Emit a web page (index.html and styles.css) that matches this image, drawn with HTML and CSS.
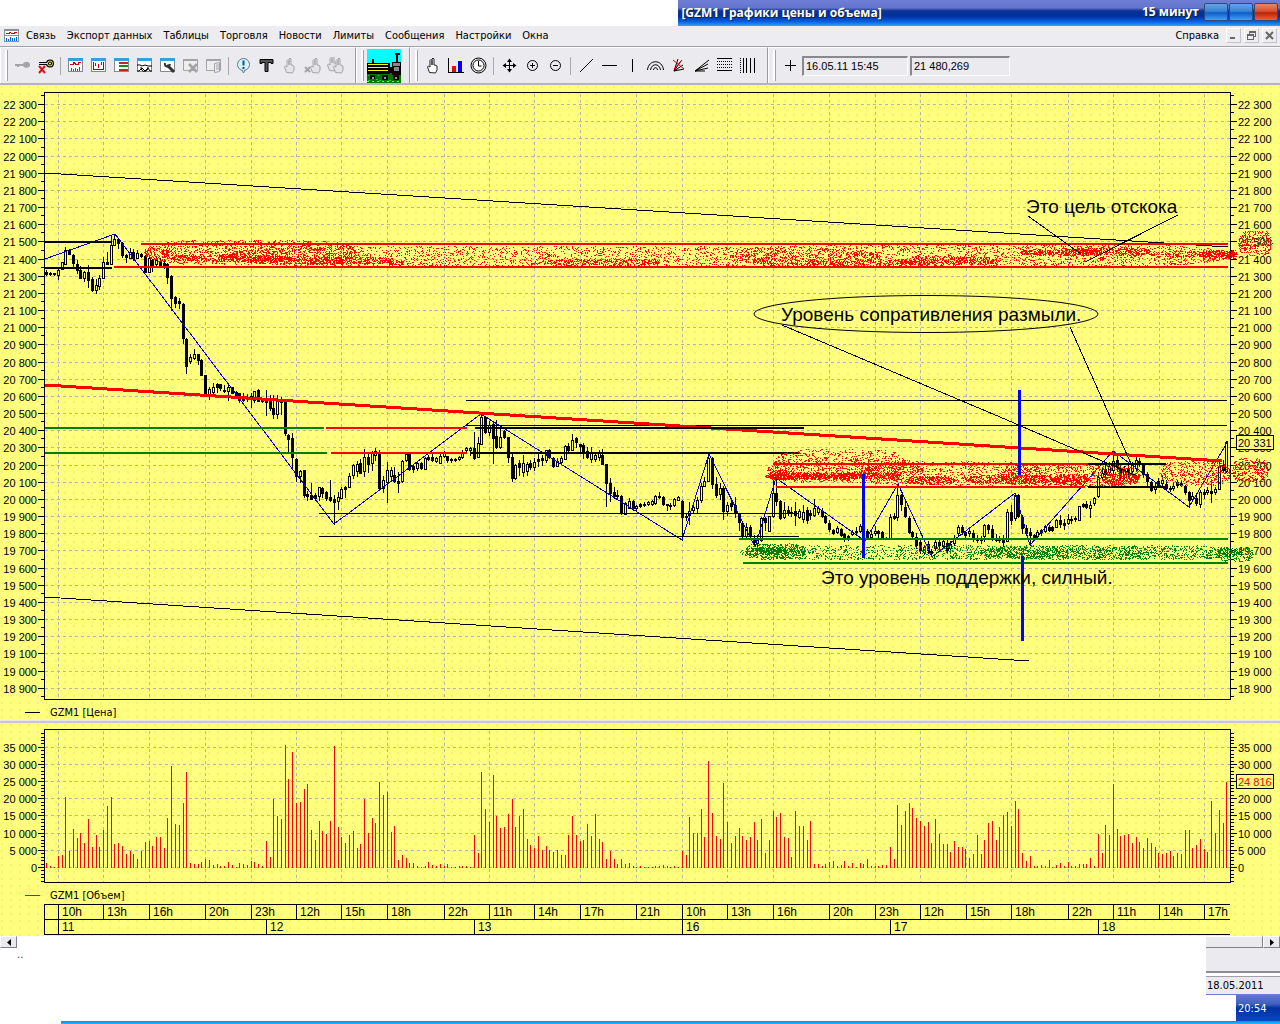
FILE: index.html
```html
<!DOCTYPE html>
<html lang="ru">
<head>
<meta charset="utf-8">
<title>GZM1 Графики цены и объема</title>
<link rel="stylesheet" href="styles.css">
</head>
<body>
<header class="titlebar">
  <div class="titlebar-blank"></div>
  <div class="titlebar-main">
    <h1 class="title">[GZM1 Графики цены и объема]</h1>
    <span class="interval">15 минут</span>
    <button class="win" aria-label="Свернуть"></button>
    <button class="win" aria-label="Развернуть"></button>
    <button class="win win-close" aria-label="Закрыть"></button>
  </div>
</header>

<nav class="menubar">
  <svg class="menu-icon" width="15" height="13" viewBox="0 0 15 13" shape-rendering="crispEdges"><path fill="#8c9097" d="M0 0h15v13H0z"/><path fill="#fff" d="M1 2h13v4H1zM1 7h13v5H1z"/><path stroke="#d00" fill="none" d="M2 4.500h3l1-1 2 1h2l1-1h2"/><path stroke="#06c" d="M2.500 12V9M4.500 12v-2M6.500 12V8M8.500 12v-3M10.500 12V9M12.500 12V8"/></svg>
  <button>Связь</button><button>Экспорт данных</button><button>Таблицы</button><button>Торговля</button><button>Новости</button><button>Лимиты</button><button>Сообщения</button><button>Настройки</button><button>Окна</button>
  <button class="help">Справка</button>
  <span class="mdi">
    <button aria-label="Свернуть окно"><svg width="9" height="9" viewBox="0 0 9 9"><path fill="#666" d="M1 6h5v2H1z"/></svg></button>
    <button aria-label="Восстановить окно"><svg width="9" height="9" viewBox="0 0 9 9" shape-rendering="crispEdges"><path fill="none" stroke="#666" d="M2.500 3V.5h6v5H7M.5 3.500h6v5h-6zM3 1.500h5M1 4.500h5"/></svg></button>
    <button aria-label="Закрыть окно"><svg width="9" height="9" viewBox="0 0 9 9"><path stroke="#666" stroke-width="2" d="M1 1l7 7M8 1L1 8"/></svg></button>
  </span>
</nav>

<div class="toolbar">
  <div class="group group-main">
    <i class="grip"></i>
    <button aria-label="Подключить"><svg viewBox="0 0 17 17"><path fill="#a4a4a8" d="M1 7h8c1-3 6-3 7 0 1 4-5 5-7 2H5v1H3V9H1z"/></svg></button>
    <button aria-label="Отключить"><svg viewBox="0 0 17 17"><path fill="none" stroke="#000" stroke-width="3" d="M2 6.500h8"/><circle cx="13" cy="6.500" r="2.500" fill="none" stroke="#000" stroke-width="3"/><path stroke="#ee5" d="M2 6.500h9"/><circle cx="13" cy="6.500" r="2.500" fill="none" stroke="#ee5"/><path stroke="#d11" stroke-width="2" d="M2 9l6 7M8 9l-6 7"/></svg></button>
    <i class="sep"></i>
    <button aria-label="График"><svg viewBox="0 0 17 17" shape-rendering="crispEdges"><use href="#window"/><path stroke="#c00" fill="none" d="M3 7.500h3l1-2 2 2h2l1-2h2"/><path stroke="#06c" d="M4.500 14v-3M6.500 14v-2M8.500 14v-3M10.500 14v-2M12.500 14v-4"/></svg></button>
    <button aria-label="Свечи"><svg viewBox="0 0 17 17" shape-rendering="crispEdges"><use href="#window"/><path stroke="#22d" fill="none" d="M3.500 5v7.500h10V5"/><path stroke="#d00" d="M5.500 6v3M8.500 7v4M11.500 5v3"/></svg></button>
    <button aria-label="Котировки"><svg viewBox="0 0 17 17" shape-rendering="crispEdges"><use href="#window"/><path stroke="#c22" stroke-width="2" d="M6 6h9M6 13h9"/><path stroke="#282" stroke-width="2" d="M6 9h9"/></svg></button>
    <button aria-label="Сделки"><svg viewBox="0 0 17 17"><use href="#window"/><path fill="#fff" stroke="#000" d="M1 8h3l2 1 3-1 3 1h4M1 14h2l3-3 3 3 3-3 2 3h2M5 10c0 6 7 6 7 0"/></svg></button>
    <button aria-label="Настроить таблицу"><svg viewBox="0 0 17 17"><use href="#window"/><path stroke="#333" stroke-width="3" d="M8 8l7 7"/><path fill="none" stroke="#333" stroke-width="2" d="M6 6c-1 4 4 5 5 1"/></svg></button>
    <button aria-label="Удалить окно" disabled><svg viewBox="0 0 17 17"><use href="#window-off"/><path stroke="#a4a4a8" stroke-width="2.500" d="M7 7l8 8M15 7l-8 8"/></svg></button>
    <button aria-label="Копировать окно" disabled><svg viewBox="0 0 17 17"><use href="#window-off"/><path fill="#eee" stroke="#a4a4a8" d="M9.500 6.500l5-1v9l-5 1zM11 8h3M11 10h3M11 12h3"/></svg></button>
    <i class="sep"></i>
    <button aria-label="Сообщение"><svg viewBox="0 0 17 17"><circle cx="8.500" cy="7.500" r="6" fill="#d7f3f7" stroke="#678"/><path fill="#d7f3f7" stroke="#678" d="M7 13l1.500 3 1.500-3"/><path stroke="#05a" stroke-width="2" d="M8.500 3.500v5M8.500 10v2"/></svg></button>
    <button aria-label="Текст"><svg viewBox="0 0 17 17"><path fill="#555" stroke="#000" d="M2 2.500h13v4h-2v-1h-3v9H7v-9H4v1H2z"/></svg></button>
    <button aria-label="Заявка" disabled><svg viewBox="0 0 17 17"><use href="#hand" fill="#e4e4e8" stroke="#a4a4a8"/></svg></button>
    <button aria-label="Снять заявку" disabled><svg viewBox="0 0 17 17"><use href="#hand" x="3" fill="#e4e4e8" stroke="#a4a4a8"/><path stroke="#a4a4a8" stroke-width="2" d="M1 10l5 5M6 10l-5 5"/></svg></button>
    <button aria-label="Изменить заявку" disabled><svg viewBox="0 0 17 17"><use href="#hand" x="-3" y="-2" fill="#e4e4e8" stroke="#a4a4a8"/><use href="#hand" x="3" fill="#e4e4e8" stroke="#a4a4a8"/></svg></button>
  </div>
  <div class="group group-train">
    <i class="grip"></i>
    <button class="train" aria-label="Паровоз"><svg width="34" height="34" viewBox="0 0 34 34" shape-rendering="crispEdges"><path fill="#0ff" d="M0 0h34v34H0z"/><path fill="#070" d="M0 23h34v11H0z"/><path fill="#000" d="M0 14h23v11H0zM5 10h2v4H5zM28 4h5v2h-5zM29 6h2v8h-2zM22 18h4v6h-4zM25 13h9v13h-9z"/><path stroke="#ff0" d="M1 15.500h20M1 18.500h20M1 21.500h20"/><path fill="#888" d="M26 14h7v3h-7zM27 18h5v4h-5z"/><path fill="#000" d="M3 26h5v4H3zM15 26h6v5h-6zM26 26h6v5h-6z"/><path fill="#999" d="M5 28h2v2H5zM17 28h2v2h-2zM28 28h2v2h-2z"/><path fill="#0d0" d="M1 31h2v1H1zM9 30h2v1H9zM12 31h2v1h-2zM22 31h2v1h-2zM1 26h1v1H1zM11 26h1v1h-1z"/><path stroke="#cc0" stroke-dasharray="2 3" d="M0 32.500h34"/></svg></button>
  </div>
  <div class="group group-draw">
    <i class="grip"></i>
    <button aria-label="Курсор"><svg viewBox="0 0 17 17"><use href="#hand" fill="#fff" stroke="#222"/></svg></button>
    <button aria-label="Диаграмма"><svg viewBox="0 0 17 17" shape-rendering="crispEdges"><path stroke="#000" fill="none" d="M1.500 1v14.500H17"/><path fill="#f00" d="M5 9h4v6H5z"/><path fill="#00f" d="M11 4h4v11h-4z"/></svg></button>
    <button aria-label="Интервал"><svg viewBox="0 0 17 17"><circle cx="8.500" cy="8.500" r="7.500" fill="none" stroke="#000"/><circle cx="8.500" cy="8.500" r="5.500" fill="#fff" stroke="#000"/><path stroke="#000" fill="none" d="M8.500 4v5h3"/></svg></button>
    <i class="sep"></i>
    <button aria-label="Переместить"><svg viewBox="0 0 17 17"><path stroke="#000" d="M8.500 3v11M3 8.500h11"/><path d="M8.500 1.500L11 5H6zM8.500 15.500L11 12H6zM1.500 8.500L5 6v5zM15.500 8.500L12 6v5z"/></svg></button>
    <button aria-label="Увеличить"><svg viewBox="0 0 17 17"><circle cx="8.500" cy="8.500" r="5" fill="none" stroke="#000"/><path stroke="#000" d="M6 8.500h5M8.500 6v5"/></svg></button>
    <button aria-label="Уменьшить"><svg viewBox="0 0 17 17"><circle cx="8.500" cy="8.500" r="5" fill="none" stroke="#000"/><path stroke="#000" d="M6 8.500h5"/></svg></button>
    <i class="sep"></i>
    <button aria-label="Линия"><svg viewBox="0 0 17 17"><path stroke="#000" d="M2 15L15 2"/></svg></button>
    <button aria-label="Горизонталь"><svg viewBox="0 0 17 17"><path stroke="#000" d="M1 8.500h15"/></svg></button>
    <button aria-label="Вертикаль"><svg viewBox="0 0 17 17"><path stroke="#000" d="M8.500 2v13"/></svg></button>
    <button aria-label="Дуги"><svg viewBox="0 0 17 17"><path stroke="#000" fill="none" d="M.5 13c1-11 15-11 16 0M3.500 13c1-7 9-7 10 0M6.500 13c0-3 4-3 4 0"/></svg></button>
    <button aria-label="Веер Ганна"><svg viewBox="0 0 17 17"><path stroke="#000" d="M4 14L8 2M4 14l7-10M4 14l9-6M4 14l10-2"/><path stroke="#e00" d="M3 3l11 9M12 3l-8 9"/></svg></button>
    <button aria-label="Веер Фибоначчи"><svg viewBox="0 0 17 17"><path stroke="#000" d="M2 14L16 3M2 14l13-7M2 14l13-3M2 14h10"/></svg></button>
    <button aria-label="Уровни"><svg viewBox="0 0 17 17" shape-rendering="crispEdges"><path stroke="#000" d="M1 1.500h15M1 13.500h15"/><path stroke="#000" stroke-dasharray="1 1" d="M1 4.500h15M1 7.500h15M1 10.500h15"/></svg></button>
    <button aria-label="Временные зоны"><svg viewBox="0 0 17 17" shape-rendering="crispEdges"><path stroke="#000" d="M4.500 1v15M7.500 1v15M11.500 1v15M15.500 1v15"/><path stroke="#000" stroke-dasharray="1 1" d="M1.500 1v15"/></svg></button>
  </div>
  <div class="group group-readout">
    <i class="grip"></i>
    <button aria-label="Перекрестие"><svg viewBox="0 0 17 17"><path stroke="#000" d="M3 8.500h11M8.500 3v11"/></svg></button>
    <input class="readout" aria-label="Время" value="16.05.11 15:45" readonly>
    <input class="readout" aria-label="Цена" value="21 480,269" readonly>
  </div>
</div>

<main>
  <section class="panel price-panel"><svg id="price" class="chart" viewBox="0 85 1280 635" role="img" aria-label="GZM1 Цена"></svg></section>
  <section class="panel volume-panel"><svg id="volume" class="chart" viewBox="0 723 1280 213" role="img" aria-label="GZM1 Объем"></svg></section>
</main>

<footer class="footer">
  <div class="footer-left">
    <button class="scroll-btn" aria-label="Влево"><svg width="4" height="7" viewBox="0 0 4 7"><path d="M4 0v7L0 3.500z"/></svg></button>
    <span class="dots">..</span>
  </div>
  <div class="footer-right">
    <div class="scroll-row"><span class="thumb"></span><button class="scroll-btn" aria-label="Вправо"><svg width="4" height="7" viewBox="0 0 4 7"><path d="M0 0v7l4-3.500z"/></svg></button></div>
    <div class="blank"></div>
    <div class="date">18.05.2011</div>
    <div class="clock">20:54</div>
  </div>
</footer>
<div class="taskbar"></div>

<svg class="defs" width="0" height="0" aria-hidden="true">
  <defs>
    <g id="window"><path fill="#fff" stroke="#888" d="M1.500 2.500h14v12h-14z"/><path fill="#3a9fd8" d="M1 1h15v3H1z"/></g>
    <g id="window-off"><path fill="#eee" stroke="#a4a4a8" d="M1.500 2.500h14v11h-14z"/><path fill="#a4a4a8" d="M1 2h15v2H1z"/></g>
    <path id="hand" d="M5.500 15.500L3.500 10l1-1 1.500 1V3.500l1-1 1 1V8V2l1-1 1 1v6l1 0 1 .5 1 .5v4l-1.500 3z"/>
  </defs>
</svg>
<script src="chart.js"></script>
</body>
</html>
```
FILE: styles.css
```css
* { box-sizing: border-box; }
body {
  margin: 0;
  background: #fff;
  color: #000;
  font: 11px/13px "DejaVu Sans Condensed", "Noto Sans", sans-serif;
}
button { font: inherit; color: inherit; background: none; border: 0; padding: 0; margin: 0; }

.titlebar { display: flex; height: 26px; }
.titlebar-blank { flex: 0 0 53%; }
.titlebar-main {
  flex: 1;
  display: flex;
  align-items: center;
  gap: 1px;
  padding: 0 2px 2px 3px;
  color: #fff;
  font: bold 12px/16px "Open Sans", sans-serif;
  text-shadow: 1px 1px #123;
  background: linear-gradient(#6f7fd6 0, #6474cc 30%, #0a3296 42%, #002f9c 62%, #0a62e8 84%, #2fa2f8 100%);
}
.title { margin: 0; padding-top: 2px; font: inherit; flex: 1; white-space: nowrap; }
.interval { margin-right: 4px; font-size: 12px; }
.win {
  width: 24px;
  height: 18px;
  border: 1px solid #2c4a7c;
  border-radius: 2px;
  background: linear-gradient(#5fa5e6, #3a84d4 45%, #0a5cc8 55%, #3fa4f4);
}
.win-close { background: linear-gradient(#e88868, #d85030 45%, #b82408 55%, #f06030); }

.menubar {
  display: flex;
  align-items: center;
  gap: 11px;
  height: 20px;
  padding: 0 3px 2px 4px;
  background: #edecf0;
}
.menu-icon { margin-right: -4px; }
.menubar button { white-space: nowrap; }
.help { margin-left: auto; }
.mdi { display: flex; gap: 3px; margin-left: -4px; }
.mdi button {
  width: 15px;
  height: 15px;
  display: grid;
  place-items: center;
  border: 1px solid;
  border-color: #fff #c4c4cc #c4c4cc #fff;
}

.toolbar {
  display: flex;
  height: 39px;
  border-top: 1px solid #a0a0a8;
  border-bottom: 2px solid #b4b4bc;
  background: #ebeaee;
}
.group {
  display: flex;
  align-items: center;
  border-left: 1px solid #fff;
  border-top: 1px solid #fff;
  border-right: 1px solid #9a9aa6;
  padding: 0 8px 0 4px;
}
.group button { width: 23px; height: 23px; display: grid; place-items: center; }
.group button svg { width: 17px; height: 17px; }
.grip {
  width: 3px;
  height: 31px;
  margin-right: 3px;
  background: #fff;
  border-right: 1px solid #a0a0aa;
}
.sep { width: 1px; height: 18px; margin: 0 3px; background: #a8a8b0; }
.group .train { width: 34px; height: 34px; }
.group .train svg { width: 34px; height: 34px; }
.group-draw .sep { margin-right: 4px; }
.group-readout { flex: 1; padding-right: 0; border-right: 0; }
.readout {
  width: 106px;
  height: 20px;
  margin-right: 2px;
  padding: 0 2px;
  border: 1px solid;
  border-width: 2px 1px 1px 2px;
  border-color: #88888e #fff #fff #88888e;
  background: #ebeaee;
  font: 11px/16px "Liberation Sans", Arial, sans-serif;
}
.readout + .readout { width: 100px; }

.panel {
  background-color: #ffff7e;
  background-image: radial-gradient(circle at 2px 2px, #fbee7c 1px, transparent 1px);
  background-size: 9px 7px;
}
.volume-panel { border-top: 3px solid; border-image: linear-gradient(#e8e8ee 0 1px, #c8c8d0 1px, #9c9cb0) 3; }
.chart { display: block; width: 100%; height: auto; }
.chart text { font: 11px "Liberation Sans", Arial, sans-serif; }
.chart .end { text-anchor: end; }
.chart .legend { font: 11px "DejaVu Sans Condensed", sans-serif; }
.chart .clocktick { font: 12px "Liberation Sans", Arial, sans-serif; }
.chart .note { font: 19px "Liberation Sans", Arial, sans-serif; }

.footer { display: flex; justify-content: space-between; }
.footer-left { display: flex; align-items: flex-start; }
.scroll-btn {
  width: 17px;
  height: 12px;
  display: grid;
  place-items: center;
  background: #ebeaee;
  border: 1px solid;
  border-color: #fff #808088 #808088 #fff;
}
.dots { padding-top: 12px; color: #333; }
.footer-right { width: 74px; display: flex; flex-direction: column; }
.scroll-row { display: flex; background: #ebeaee; }
.thumb { flex: 1; border: 1px solid; border-color: #fff #808088 #808088 #fff; border-left: 0; }
.blank { height: 25px; background: #ebeaee; border-bottom: 2px solid #8c8c96; }
.date { height: 22px; padding: 6px 1px 0; background: #ebeaee; border-bottom: 1px solid #6c7cd0; box-shadow: inset 0 3px #fff, inset 0 4px #a0a0a8; }
.clock {
  height: 26px;
  margin-left: 30px;
  padding: 7px 2px 0;
  color: #fff;
  background: linear-gradient(#6474d0, #4060c0 35%, #0030a0 50%, #0848c0);
}
.taskbar { height: 3px; margin-left: 61px; background: linear-gradient(#1088e8, #28b4fc); }
.defs { position: absolute; }
```
FILE: chart.js
```js
const NS = 'http://www.w3.org/2000/svg';
const price = document.getElementById('price');
const volume = document.getElementById('volume');
const LEFT = 44, RIGHT = 1230;

// One bar per 15 minutes.
const barX = i => Math.floor(46.9 + 3.782 * i);

function add(root, name, attrs, text) {
  const el = document.createElementNS(NS, name);
  for (const k in attrs) el.setAttribute(k, attrs[k]);
  if (text !== undefined) el.textContent = text;
  root.appendChild(el);
  return el;
}
const path = (root, d, stroke, width = 1, extra = {}) =>
  add(root, 'path', { d, fill: 'none', stroke, 'stroke-width': width, 'shape-rendering': 'crispEdges', ...extra });
const label = (root, x, y, text, cls = '', fill = '#000') => add(root, 'text', { x, y, class: cls, fill }, text);
const money = n => String(n).replace(/(\d)(?=\d{3}$)/, '$1 ');

const hours = [[58,'10h'],[103,'13h'],[149,'16h'],[205,'20h'],[251,'23h'],[296,'12h'],[341,'15h'],[387,'18h'],[444,'22h'],[489,'11h'],[534,'14h'],[580,'17h'],[636,'21h'],[682,'10h'],[727,'13h'],[773,'16h'],[829,'20h'],[875,'23h'],[920,'12h'],[966,'15h'],[1011,'18h'],[1068,'22h'],[1113,'11h'],[1159,'14h'],[1204,'17h']];
const days = [[58,'11'],[266,'12'],[474,'13'],[682,'16'],[890,'17'],[1098,'18']];

// high, body top, body bottom, low; "h" marks a hollow (rising) candle.
const candles = `270 272 274 275,272 273 274 275,273 273 274 275,267 270 275 279h,262 262 269 269h,247 250 264 264h,249 250 254 254,254 255 263 267,260 264 270 273,266 270 278 278,271 272 278 281h,265 272 280 287,277 279 290 291,279 285 290 293h,275 278 286 289h,257 262 278 278h,252 262 264 264,235 245 264 264h,234 239 245 245h,238 239 243 248,242 243 255 257,254 255 257 262,248 252 258 258h,249 252 258 260,250 253 258 258h,253 254 256 257,255 256 272 272,256 258 272 272h,259 260 265 271,256 260 264 267h,258 261 265 265,261 263 265 268,263 264 277 283,275 276 298 310,296 297 303 307,298 301 303 308,303 304 338 343,338 339 366 373,354 357 361 363h,349 354 358 359h,354 354 360 364,359 360 375 375,375 375 393 393,387 389 394 399h,383 387 392 394h,383 384 387 392,384 384 388 390,385 390 391 392,385 387 391 400h,387 387 393 393,391 392 395 395,393 393 400 402,393 397 400 401,394 397 399 401h,393 396 399 407,391 391 400 402h,389 390 401 401,399 400 401 402,
390 400 402 415,395 400 408 410,395 408 414 418,395 400 414 418h,397 400 402 414,401 402 433 435,434 435 439 451,433 438 457 469,458 459 476 481,470 471 476 482h,470 470 495 497,491 494 496 500,483 495 499 499,493 495 498 500,487 487 496 500h,487 488 493 497,491 492 498 500,480 497 500 501,495 499 502 524,492 497 501 509h,487 489 498 498h,486 487 489 497,473 476 487 487h,464 465 475 478h,461 464 471 476h,459 463 473 473,449 457 471 476h,453 457 464 472,451 453 463 470h,448 451 455 460h,450 452 488 490,476 480 488 492h,462 470 482 502h,467 470 476 480h,467 475 481 482,472 481 483 492,460 461 481 482h,453 454 460 461h,453 454 469 470,465 466 469 472,462 463 468 470h,462 463 468 469,457 458 469 469h,455 457 459 460,454 457 460 461,457 458 461 462h,453 456 463 463h,451 453 456 457h,456 456 460 462,458 459 460 462,458 459 460 461,456 457 459 460h,450 452 457 458h,447 448 450 452h,447 448 450 455h,
432 448 458 459,437 443 457 457h,415 417 444 444h,416 417 432 433,421 425 432 435h,422 424 438 463,420 436 447 448,428 437 447 448h,430 431 437 438,437 437 457 462,453 457 478 481,464 465 478 479h,460 463 467 475,455 463 472 476h,462 464 471 475h,460 463 467 469,458 462 467 470h,453 459 461 466,455 458 460 465,450 450 460 462h,449 450 457 458,457 458 466 467,458 461 466 466h,456 458 462 463h,445 446 459 459h,443 446 450 452,434 440 450 450h,437 438 442 447,444 444 446 453,443 445 453 458,447 451 457 458,447 452 459 462h,452 455 459 461h,450 453 457 460h,449 455 464 464,464 464 483 506,478 483 493 501,487 492 496 498,490 495 496 498,495 496 513 514,502 503 514 514h,498 501 508 508h,500 501 508 510,505 506 508 510h,503 504 506 507,502 504 505 506,501 502 504 505h,500 501 504 505h,495 496 503 504h,492 496 497 498,496 497 504 505,504 504 505 510,503 505 506 509,498 499 505 506h,496 497 500 500h,
500 501 517 540,513 516 517 520,502 511 515 524h,505 507 510 513h,497 500 508 512h,483 486 500 502h,477 481 486 486h,455 458 481 481h,457 458 484 488,477 484 495 497,483 488 494 499h,486 488 511 519,502 505 511 515h,498 503 506 510,497 505 513 517,513 514 522 530,522 523 536 538,523 527 536 538h,525 527 535 536,535 538 542 544,535 540 543 548h,517 518 540 541h,517 518 522 530,516 516 531 531h,480 493 516 517h,478 493 501 505,500 501 518 519,502 510 517 518h,506 510 513 515,507 512 513 516,502 511 515 525,509 511 517 518h,505 512 519 522h,507 510 520 523,510 513 515 519,499 508 515 516h,506 508 512 514h,508 511 516 517,515 516 522 523,520 523 529 531,529 530 533 534,526 528 532 533h,528 529 535 536,533 534 539 541,535 536 538 540,530 532 534 535h,527 531 532 535,524 526 531 532h,530 531 535 537,529 531 537 538,530 534 537 539h,526 531 533 535h,530 531 533 537,531 532 538 539,537 538 539 539,
514 517 539 539h,513 516 518 519,484 495 517 520h,494 495 504 510,500 507 516 517,516 518 532 533,531 532 536 538,533 537 545 548,539 542 550 553,545 547 552 554h,541 544 550 553,549 551 553 556,538 542 548 550h,538 542 545 549,539 541 546 548h,540 543 550 552,541 544 548 552h,535 538 543 545h,525 527 533 535h,525 527 532 534,531 532 535 538,527 531 533 536h,530 533 537 541,535 538 540 542,536 539 540 543,524 525 536 541h,524 525 529 533,525 529 539 540,534 538 540 541,536 538 540 542,535 540 542 546,509 512 541 541h,505 512 520 524,494 495 518 520h,494 495 516 517,515 517 528 533,525 528 533 535,528 532 535 545,534 535 537 539,530 532 536 537h,529 530 532 535,525 526 531 532h,525 527 530 531,526 527 530 531,519 520 527 527h,515 520 524 527,519 523 525 529,514 519 523 524h,516 519 520 523,516 518 519 521,506 506 520 520h,503 504 506 507,501 504 507 508,501 505 508 517h,497 498 503 505h,
472 477 496 497h,467 473 477 480h,465 469 474 478,462 466 472 475h,451 461 470 473h,456 460 467 471,464 468 474 480,466 469 474 478h,465 468 472 476,462 464 471 474h,457 460 468 470h,458 461 464 466,463 465 474 477,472 474 481 486,481 482 490 491,482 486 489 493h,478 481 485 486,476 480 483 485h,480 484 488 489,486 488 489 491,483 486 488 490h,480 482 485 487,481 483 485 486,485 486 492 494,491 492 500 507,492 496 499 501h,494 498 503 505,490 492 504 507h,489 492 494 498,487 490 492 494h,483 491 493 502,487 489 492 494h,462 466 489 489h,460 465 470 471,441 442 471 472h`
  .split(/,\s*/).map(s => ({ hollow: s.endsWith('h'), v: s.replace('h', '').split(' ').map(Number) }));

// Traded contracts per bar, in hundreds.
const volumes = [
  16,5,2,35,38,212,50,116,89,104,74,146,62,98,62,113,185,212,71,74,65,41,50,41,26,50,77,80,65,92,92,59,149,305,131,128,194,287,15,11,11,17,26,23,8,11,5,5,17,8,2,14,11,8,20,17,11,5,
  80,32,206,155,146,368,266,347,194,197,236,251,113,83,140,110,101,140,365,122,92,74,98,110,59,71,206,104,149,134,257,218,227,107,125,23,38,29,14,14,5,2,5,17,8,5,11,5,11,2,2,5,5,5,2,
  98,44,287,176,137,278,155,119,122,161,206,122,155,176,86,68,59,95,53,65,53,47,53,38,38,98,155,98,80,83,131,95,161,86,77,26,50,26,11,26,11,14,5,2,5,2,2,2,5,5,8,5,2,5,2,
  50,38,152,104,104,176,92,320,164,95,86,254,137,74,95,119,95,83,92,137,83,146,44,83,170,152,164,92,89,32,170,125,125,83,140,11,11,5,11,17,20,5,8,20,5,14,2,14,11,26,5,5,5,8,8,
  62,26,188,128,170,194,179,149,140,125,137,74,146,101,71,71,47,80,62,62,56,29,41,98,41,83,134,140,83,122,158,167,125,200,176,44,20,35,5,5,8,5,23,2,8,14,5,17,5,5,11,11,11,29,5,
  101,44,128,98,251,116,95,98,101,74,92,77,59,89,74,62,44,41,44,50,35,44,41,113,113,59,68,86,56,47,200,104,173,134,258];

function seeded(seed) {
  return () => (seed = (seed * 1664525 + 1013904223) % 4294967296) / 4294967296;
}
// Spray-can marks: [centre x, centre y, half width, half height, dots].
function spray(color, seed, blobs) {
  const rnd = seeded(seed);
  let d = '';
  for (const [cx, cy, rx, ry, n] of blobs) {
    for (let k = 0; k < n; k++) {
      const x = Math.round(cx + (rnd() * 2 - 1) * rx);
      const bend = Math.sqrt(Math.max(0, 1 - Math.pow(Math.abs(x - cx) / rx, 6)));
      const y = Math.round(cy + (rnd() * 2 - 1) * ry * bend);
      d += `M${x} ${y}h1v1h-1z`;
    }
  }
  add(price, 'path', { d, fill: color, 'shape-rendering': 'crispEdges' });
}

function drawPrice() {
  let gridY = '', ticks = '', minor = '';
  const labels = [];
  for (let k = 0; k < 35; k++) {
    const y = Math.round(104 + 17.17 * k) + .5;
    gridY += `M45 ${y}H${RIGHT}`;
    ticks += `M38 ${y}H44M1231 ${y}H1237`;
    minor += `M41 ${y - 9}H44M1231 ${y - 9}H1234`;
    labels.push([y + 4, money(22300 - 100 * k)]);
  }
  minor += 'M41 696.500H44M1231 696.500H1234';
  const gridX = hours.map(h => `M${h[0] + .5} 94V698`).join('');
  const dash = { 'stroke-dasharray': '3 3' };
  path(price, gridY + gridX, '#b4b4b0', 1, dash);
  path(price, `M${LEFT + .5} 92.500H${RIGHT + .5}V699.500H${LEFT + .5}z` + ticks + minor, '#000');
  labels.forEach(([y, t]) => { label(price, 37, y, t, 'end'); label(price, 1238, y, t); });

  let wicks = '', black = '', hollow = '';
  candles.forEach(({ hollow: isHollow, v: [hi, top, bot, lo] }, i) => {
    const x = barX(i);
    if (isHollow && bot - top > 1) {
      wicks += `M${x + .5} ${hi}V${top}M${x + .5} ${bot}V${lo + 1}`;
      hollow += `M${x - .5} ${top + .5}h2V${bot + .5}h-2z`;
    } else {
      wicks += `M${x + .5} ${hi}V${lo + 1}`;
      black += `M${x - 1} ${top}h3V${bot + 1}h-3z`;
    }
  });
  path(price, wicks, '#000');
  path(price, hollow, '#000', 1, { fill: '#ffff7e' });
  add(price, 'path', { d: black, 'shape-rendering': 'crispEdges' });

  path(price, 'M45 259L115 234L334 524L481 414L682 540L709 454L755 547L776 478L865 541L898 484L932 557L1015 493L1030 545L1113 451L1189 507L1228 441', '#00c');
  path(price, 'M466 400.500H1227M466 425.500H1227M319 513.500H799M319 536.500H799M45 173L1228 247M45 597L1029 661', '#000');
  path(price, 'M45 385L1222 461', '#f00', 3);
  path(price, 'M45 428H324M45 453H327M739 539H1228M743 563H1228', '#008000', 2);
  path(price, 'M326 428H467M331 453H467M141 244H1228M114 267H1228M773 464H1088M776 487H1085', '#f00', 2);
  path(price, 'M45 242H112M45 268H112M475 428H804M470 453H800M1088 464H1166M1088 487H1166', '#000', 2);

  spray('#f00', 7, [
    [250, 252, 106, 12, 1500], [550, 256, 330, 10, 2500], [980, 255, 250, 11, 2100],
    [230, 258, 60, 3, 450], [320, 260, 70, 4, 500], [165, 253, 4, 4, 90], [340, 261, 4, 3, 40],
    [395, 262, 8, 3, 70], [600, 262, 60, 3, 300], [812, 263, 7, 3, 60], [880, 263, 50, 3, 260], [950, 260, 50, 4, 400],
    [1060, 252, 40, 3, 350], [1110, 251, 40, 4, 400], [1180, 254, 30, 3, 130],
    [1218, 254, 17, 4, 260], [1255, 243, 17, 12, 320], [1232, 254, 5, 4, 60],
    [840, 465, 66, 16, 800], [845, 470, 78, 12, 600], [950, 473, 90, 12, 800], [1070, 475, 70, 11, 900],
    [815, 476, 50, 3, 700], [870, 475, 30, 3, 260], [780, 475, 10, 5, 120], [930, 480, 25, 4, 300],
    [1010, 479, 45, 4, 550], [1070, 479, 17, 5, 320], [1120, 479, 18, 5, 320], [1195, 473, 35, 12, 500], [1250, 470, 18, 12, 300]
  ]);
  spray('#008000', 11, [
    [775, 551, 30, 8, 450], [900, 552, 160, 7, 1200], [1110, 552, 130, 7, 1500],
    [775, 550, 20, 3, 150], [1080, 554, 60, 5, 200], [1235, 554, 18, 7, 190]
  ]);

  path(price, 'M863.500 474V558M1019.500 390V475M1022.500 556V641', '#00f', 3);
  path(price, 'M1028 216L1081 254M1085 262L1178 215M782 325L1000 417L1137 476M1070 327L1132 466', '#000');
  add(price, 'ellipse', { cx: 926, cy: 314, rx: 172, ry: 18.5, fill: 'none', stroke: '#000' });
  label(price, 1026, 213, 'Это цель отскока', 'note');
  label(price, 781, 321, 'Уровень сопративления размыли.', 'note');
  label(price, 821, 584, 'Это уровень поддержки, силный.', 'note');

  add(price, 'rect', { x: 1236.5, y: 435.5, width: 37, height: 14, fill: '#ffff7e', stroke: '#000' });
  label(price, 1238, 447, '20 331');
  path(price, 'M25 712.500H40', '#000');
  label(price, 50, 716, 'GZM1 [Цена]', 'legend');
}

function drawVolume() {
  const zero = 867;
  let grid = hours.map(h => `M${h[0] + .5} 731V882`).join('');
  let ticks = '';
  for (let k = -4; k <= 39; k++) {
    const y = Math.round(zero - k * 3.434) + .5;
    const major = k % 5 === 0 && k >= 0 && k <= 35;
    ticks += major ? `M38 ${y}H44M1231 ${y}H1237` : `M41 ${y}H44M1231 ${y}H1234`;
    if (major) {
      grid += `M45 ${y}H${RIGHT}`;
      label(volume, 37, y + 4, money(k * 1000), 'end');
      if (k !== 25) label(volume, 1238, y + 4, money(k * 1000));
    }
  }
  path(volume, grid, '#b4b4b0', 1, { 'stroke-dasharray': '3 3' });
  path(volume, `M${LEFT + .5} 729.500H${RIGHT + .5}V882.500H${LEFT + .5}z` + ticks, '#000');
  path(volume, volumes.map((v, i) => `M${barX(i) + .5} 868V${868 - Math.round(v / 3)}`).join(''), '#f00');

  add(volume, 'rect', { x: 1236.5, y: 774.5, width: 37, height: 14, fill: '#ffff7e', stroke: '#000' });
  label(volume, 1238, 786, '24 816', '', '#f00');
  path(volume, 'M25 895.500H40', '#f00');
  label(volume, 50, 899, 'GZM1 [Объем]', 'legend');

  path(volume, `M${RIGHT} 904.500H${LEFT + .5}V934.500H${RIGHT}M${LEFT} 919.500H${RIGHT}`
    + hours.map(h => `M${h[0] + .5} 905V919`).join('')
    + days.map(d => `M${d[0] + .5} 920V934`).join(''), '#000');
  hours.forEach(([x, t]) => label(volume, x + 4, 916, t, 'clocktick'));
  days.forEach(([x, t]) => label(volume, x + 4, 931, t, 'clocktick'));
}

drawPrice();
drawVolume();
```
